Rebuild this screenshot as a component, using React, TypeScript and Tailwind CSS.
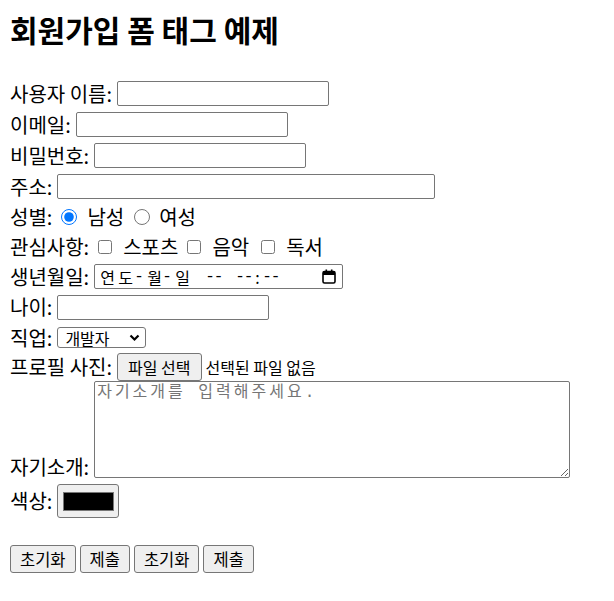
import React from 'react';

const field = 'h-[25px] rounded-[2px] border border-[#767676] bg-white px-[2px] text-[16px] outline-none';
const btn = 'h-[28px] rounded-[3px] border border-[#767676] bg-[#efefef] px-[9px] text-[16.5px] leading-none';

function Row({ label, h = 31, children }: { label: string; h?: number; children: React.ReactNode }) {
  return (
    <div className="flex items-center" style={{ height: h }}>
      <span className="mr-[5px] whitespace-pre">{label}</span>
      {children}
    </div>
  );
}

function CalendarIcon() {
  return (
    <svg width="14" height="15" viewBox="0 0 14 15" className="text-black">
      <rect x="1" y="2.5" width="12" height="11.5" rx="1.5" fill="none" stroke="currentColor" strokeWidth="1.6" />
      <rect x="1" y="2.5" width="12" height="3.5" fill="currentColor" />
      <rect x="3.5" y="0.5" width="1.6" height="3" fill="currentColor" />
      <rect x="8.9" y="0.5" width="1.6" height="3" fill="currentColor" />
    </svg>
  );
}

// date-time field text, laid out cell by cell like the native control
function DateText() {
  const mono = "font-['Liberation_Mono',monospace]";
  return (
    <div className="flex items-center whitespace-pre text-[16px]">
      <span className="w-[18px]">연</span>
      <span className="w-[16px]">도</span>
      <span className={`w-[13px] ${mono}`}>-</span>
      <span className="w-[15px]">월</span>
      <span className={`w-[13px] ${mono}`}>-</span>
      <span className="w-[30px]">일</span>
      <span className={`w-[30px] tracking-[-1px] ${mono}`}>--</span>
      <span className={`w-[20px] tracking-[-1px] ${mono}`}>--</span>
      <span className="w-[7px]">:</span>
      <span className={`tracking-[-1px] ${mono}`}>--</span>
    </div>
  );
}

export default function App() {
  return (
    <div className="min-h-screen bg-white px-[10px] text-black font-['Noto_Sans_CJK_KR','Noto_Sans',sans-serif]">
      <h2 className="pt-[9px] text-[30px] font-bold leading-[40px]">회원가입 폼 태그 예제</h2>

      <form className="mt-[29px] flex flex-col text-[20px] leading-none">
        <Row label="사용자 이름:">
          <input className={`${field} w-[212px]`} />
        </Row>
        <Row label="이메일:">
          <input className={`${field} w-[212px]`} />
        </Row>
        <Row label="비밀번호:">
          <input type="password" className={`${field} w-[212px]`} />
        </Row>
        <Row label="주소:">
          <input className={`${field} w-[378px]`} />
        </Row>
        <Row label="성별:" h={30}>
          <input type="radio" name="g" defaultChecked className="ml-[4px] mr-[10px] h-[16px] w-[16px] accent-[#0075ff]" />
          <span>남성</span>
          <input type="radio" name="g" className="ml-[10px] mr-[9px] h-[16px] w-[16px]" />
          <span>여성</span>
        </Row>
        <Row label="관심사항:" h={29}>
          <input type="checkbox" className="ml-[4px] mr-[11px] h-[14px] w-[14px]" />
          <span>스포츠</span>
          <input type="checkbox" className="ml-[9px] mr-[11px] h-[14px] w-[14px]" />
          <span>음악</span>
          <input type="checkbox" className="ml-[12px] mr-[11px] h-[14px] w-[14px]" />
          <span>독서</span>
        </Row>
        <Row label="생년월일:">
          <div className={`${field} flex w-[249px] items-center justify-between pl-[5px] pr-[6px]`}>
            <DateText />
            <CalendarIcon />
          </div>
        </Row>
        <Row label="나이:" h={30}>
          <input type="number" className={`${field} w-[212px]`} />
        </Row>
        <Row label="직업:" h={31}>
          <div className="flex h-[21px] w-[89px] items-center justify-between rounded-[3px] border border-[#767676] bg-white pl-[7px] pr-[5px] text-[16px]">
            <span>개발자</span>
            <svg width="11" height="8" viewBox="0 0 11 8">
              <path d="M1.5 1.5 L5.5 5.5 L9.5 1.5" fill="none" stroke="black" strokeWidth="2.2" />
            </svg>
          </div>
        </Row>
        <Row label="프로필 사진:" h={27}>
          <button type="button" className={`${btn} px-[10px] text-[16px]`}>파일 선택</button>
          <span className="ml-[4px] text-[16px]">선택된 파일 없음</span>
        </Row>
        <div className="flex h-[98px] items-end">
          <span className="mb-[1px] mr-[5px]">자기소개:</span>
          <textarea
            placeholder="자기소개를 입력해주세요."
            className="h-[97px] w-[476px] rounded-[2px] border border-[#767676] px-[2px] py-[1px] text-[16px] leading-[20px] tracking-[3px] outline-none placeholder:text-[#757575] font-['Liberation_Mono','Noto_Sans_CJK_KR',monospace]"
          />
        </div>
        <Row label="색상:" h={46}>
          <div className="flex h-[34px] w-[62px] items-center justify-center rounded-[3px] border border-[#767676] bg-[#efefef]">
            <div className="h-[19px] w-[51px] border border-[#777] bg-black" />
          </div>
        </Row>
        <div className="mt-[21px] flex gap-[4px]">
          <button type="reset" className={btn}>초기화</button>
          <button type="button" className={btn}>제출</button>
          <button type="reset" className={btn}>초기화</button>
          <button type="button" className={btn}>제출</button>
        </div>
      </form>
    </div>
  );
}
